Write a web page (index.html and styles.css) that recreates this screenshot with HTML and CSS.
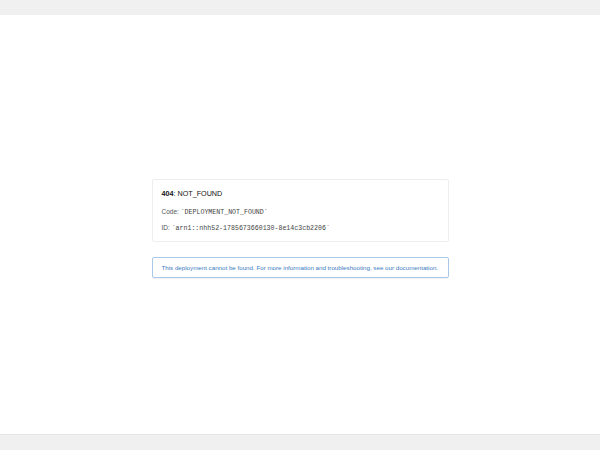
FILE: index.html
```html
<!DOCTYPE html>
<html>
<head>
<meta charset="utf-8">
<link rel="stylesheet" href="styles.css">
</head>
<body>
<div class="band-top"></div>
<main class="main">
  <div class="stack">
    <div class="card">
      <p class="title"><strong>404</strong>: NOT_FOUND</p>
      <p class="line line-code">Code: <code>`DEPLOYMENT_NOT_FOUND`</code></p>
      <p class="line line-id">ID: <code>`arn1::nhh52-1785673660130-8e14c3cb2206`</code></p>
    </div>
    <div class="note">This deployment cannot be found. For more information and troubleshooting, see our documentation.</div>
  </div>
</main>
<div class="band-bottom"></div>
</body>
</html>
```
FILE: styles.css
```css
html, body { margin: 0; padding: 0; }
body {
  width: 600px;
  height: 450px;
  background: #ffffff;
  font-family: "Liberation Sans", Arial, sans-serif;
  color: #222;
  display: flex;
  flex-direction: column;
}
.band-top { height: 15px; background: #f0f0f0; }
.band-bottom { height: 15px; background: #f0f0f0; border-top: 1px solid #e6e6e6; }
.main {
  flex: 1;
  display: flex;
  justify-content: center;
  padding-top: 164px;
  box-sizing: border-box;
}
.stack { width: 297px; display: flex; flex-direction: column; gap: 15px; }
.card {
  border: 1px solid #eeeeee;
  border-radius: 2px;
  padding: 9px 9px 9px;
  height: 63px;
  box-sizing: border-box;
}
.card p { margin: 0; }
.title { font-size: 7.2px; line-height: 9px; color: #111; }
.title strong { font-weight: bold; }
.line { font-size: 6.5px; line-height: 8px; color: #555; }
.line-code { margin-top: 10px !important; }
.line-id { margin-top: 7px !important; }
code {
  font-family: "Liberation Mono", "DejaVu Sans Mono", monospace;
  font-size: 6.6px;
  color: #444;
}
.note {
  border: 1px solid #a9c9ea;
  border-radius: 2px;
  box-shadow: 0 1px 1px rgba(0,0,0,0.06);
  padding: 0 9px;
  height: 21px;
  box-sizing: border-box;
  display: flex;
  align-items: center;
  font-size: 6.2px;
  color: #3a7cc0;
  white-space: nowrap;
}
```
